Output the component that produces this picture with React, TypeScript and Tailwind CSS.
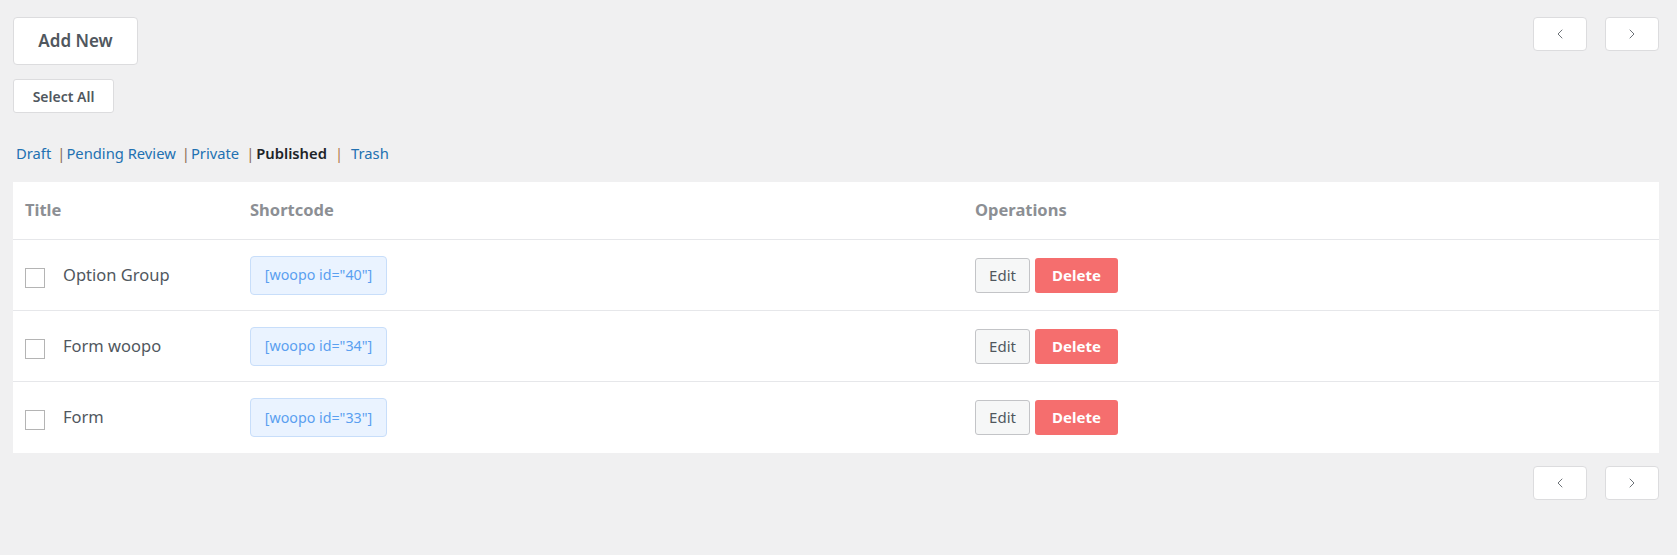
import { ChevronLeft, ChevronRight } from 'lucide-react';

const rows = [
  { title: 'Option Group', id: '40' },
  { title: 'Form woopo', id: '34' },
  { title: 'Form', id: '33' },
];

function Pager() {
  return (
    <div className="flex gap-[18px]">
      <button className="w-[54px] h-[34px] bg-white border border-[#dcdcde] rounded-[4px] flex items-center justify-center text-[#50575e]">
        <ChevronLeft size={16} strokeWidth={1.25} />
      </button>
      <button className="w-[54px] h-[34px] bg-white border border-[#dcdcde] rounded-[4px] flex items-center justify-center text-[#50575e]">
        <ChevronRight size={16} strokeWidth={1.25} />
      </button>
    </div>
  );
}

export default function App() {
  return (
    <div className="min-h-screen w-full bg-[#f0f0f1] pl-[13px] pr-[18px] pt-[17px] font-['Noto_Sans',sans-serif]">
      {/* top bar */}
      <div className="flex justify-between items-start">
        <button className="w-[125px] h-[48px] bg-white border border-[#dcdcde] rounded-[4px] text-[17px] font-semibold text-[#50575e]">
          Add New
        </button>
        <Pager />
      </div>

      <button className="mt-[14px] w-[101px] h-[34px] bg-white border border-[#dcdcde] rounded-[3px] text-[14px] font-semibold text-[#50575e]">
        Select All
      </button>

      {/* status filters */}
      <div className="mt-[30px] h-[20px] flex items-center pl-[3px] text-[14.75px] leading-5">
        <a className="text-[#2271b1]">Draft</a>
        <span className="text-[#8a6d55] ml-[6px]">|</span>
        <a className="text-[#2271b1] ml-[1px]">Pending Review</a>
        <span className="text-[#8a6d55] ml-[6px]">|</span>
        <a className="text-[#2271b1] ml-[1px]">Private</a>
        <span className="text-[#8a6d55] ml-[7px]">|</span>
        <span className="text-[#1d2327] font-semibold ml-[2px]">Published</span>
        <span className="text-[#b07a4a] ml-[8px]">|</span>
        <a className="text-[#2271b1] ml-[8px]">Trash</a>
      </div>

      {/* table */}
      <div className="mt-[19px] bg-white">
        <div className="grid grid-cols-[225px_725px_1fr] pl-3 h-[58px] items-center border-b border-[#e6e7ea] text-[16.5px] font-bold text-[#8c8f94]">
          <div>Title</div>
          <div>Shortcode</div>
          <div>Operations</div>
        </div>
        {rows.map((r, i) => (
          <div
            key={r.id}
            className={`grid grid-cols-[225px_725px_1fr] pl-3 h-[71px] items-center ${i < rows.length - 1 ? 'border-b border-[#e6e7ea]' : ''}`}
          >
            <div className="flex items-center">
              <span className="w-[20px] h-[20px] border border-[#b4b4b4] bg-white mt-[5px]" />
              <span className="ml-[18px] text-[16.5px] text-[#50575e]">{r.title}</span>
            </div>
            <div>
              <span className="inline-flex items-center justify-center w-[137px] h-[39px] bg-[#eaf3ff] border border-[#c8defa] rounded-[4px] text-[14.25px] text-[#5a9ff0]">
                [woopo id="{r.id}"]
              </span>
            </div>
            <div className="flex gap-[5px]">
              <button className="w-[55px] h-[35px] bg-[#f6f7f7] border border-[#c3c4c7] rounded-[3px] text-[15px] text-[#50575e]">
                Edit
              </button>
              <button className="w-[83px] h-[35px] bg-[#f56e6e] rounded-[3px] text-[15px] font-bold text-white">
                Delete
              </button>
            </div>
          </div>
        ))}
      </div>

      <div className="mt-[13px] flex justify-end">
        <Pager />
      </div>
    </div>
  );
}
